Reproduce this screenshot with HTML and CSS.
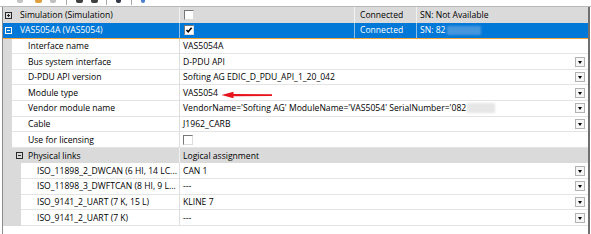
FILE: index.html
```html
<!DOCTYPE html>
<html>
<head>
<meta charset="utf-8">
<link rel="stylesheet" href="styles.css">
</head>
<body>
<div class="toolbar">
  <span class="ti t1"></span>
  <span class="ti t2"></span>
  <span class="ti t3"></span>
  <span class="tsep s1"></span>
  <span class="ti t4"></span>
  <span class="ti t5"></span>
  <span class="tsep s2"></span>
  <span class="ti t6"></span>
  <span class="tsep s3"></span>
  <span class="ti t7"></span>
</div>
<div class="grid">
  <div class="row group top">
    <div class="cell name gname"><svg class="exp" width="7" height="7" viewBox="0 0 7 7"><rect x="0.5" y="0.5" width="6" height="6" fill="none" stroke="currentColor"/><path d="M2 3.5H5M3.5 2V5" stroke="currentColor"/></svg><span>Simulation (Simulation)</span></div>
    <div class="cell val short"><span class="cb topcb"></span></div>
    <div class="cell stat">Connected</div>
    <div class="cell sn">SN: Not Available</div>
  </div>
  <div class="row sel top">
    <div class="cell name gname"><svg class="exp" width="7" height="7" viewBox="0 0 7 7"><rect x="0.5" y="0.5" width="6" height="6" fill="none" stroke="currentColor"/><path d="M2 3.5H5" stroke="currentColor"/></svg><span>VAS5054A (VAS5054)</span></div>
    <div class="cell val short"><span class="cb topcb"><svg width="8" height="8" viewBox="0 0 8 8"><path d="M1.5 4L3.2 5.8L6.6 1.8" fill="none" stroke="#000" stroke-width="1.6"/></svg></span></div>
    <div class="cell stat">Connected</div>
    <div class="cell sn">SN: 82<span class="redact-blue"></span></div>
  </div>
  <div class="row child">
    <div class="indent"></div>
    <div class="cell name">Interface name</div>
    <div class="cell val">VAS5054A</div>
  </div>
  <div class="row child">
    <div class="indent"></div>
    <div class="cell name">Bus system interface</div>
    <div class="cell val">D-PDU API<span class="dd"></span></div>
  </div>
  <div class="row child">
    <div class="indent"></div>
    <div class="cell name">D-PDU API version</div>
    <div class="cell val">Softing AG EDIC_D_PDU_API_1_20_042<span class="dd"></span></div>
  </div>
  <div class="row child">
    <div class="indent"></div>
    <div class="cell name">Module type</div>
    <div class="cell val mod">VAS5054<span class="dd"></span>
      <svg class="arrow" width="52" height="8" viewBox="0 0 52 8"><polygon points="0.5,4 12.5,0.8 12.5,2.9 51,3.3 51,4.9 12.5,5.2 12.5,7.2" fill="#e8141c"/></svg>
    </div>
  </div>
  <div class="row child">
    <div class="indent"></div>
    <div class="cell name">Vendor module name</div>
    <div class="cell val">VendorName='Softing AG' ModuleName='VAS5054' SerialNumber='082<span class="redact-gray"></span><span class="dd"></span></div>
  </div>
  <div class="row child">
    <div class="indent"></div>
    <div class="cell name">Cable</div>
    <div class="cell val">J1962_CARB<span class="dd"></span></div>
  </div>
  <div class="row child">
    <div class="indent"></div>
    <div class="cell name">Use for licensing</div>
    <div class="cell val"><span class="cb"></span></div>
  </div>
  <div class="row group">
    <div class="cell name pname"><svg class="exp" width="7" height="7" viewBox="0 0 7 7"><rect x="0.5" y="0.5" width="6" height="6" fill="none" stroke="currentColor"/><path d="M2 3.5H5" stroke="currentColor"/></svg><span>Physical links</span></div>
    <div class="cell val">Logical assignment</div>
  </div>
  <div class="row child iso">
    <div class="indent"></div>
    <div class="cell name">ISO_11898_2_DWCAN (6 HI, 14 LC...</div>
    <div class="cell val">CAN 1<span class="dd"></span></div>
  </div>
  <div class="row child iso">
    <div class="indent"></div>
    <div class="cell name">ISO_11898_3_DWFTCAN (8 HI, 9 L...</div>
    <div class="cell val">---<span class="dd"></span></div>
  </div>
  <div class="row child iso">
    <div class="indent"></div>
    <div class="cell name">ISO_9141_2_UART (7 K, 15 L)</div>
    <div class="cell val">KLINE 7<span class="dd"></span></div>
  </div>
  <div class="row child iso">
    <div class="indent"></div>
    <div class="cell name">ISO_9141_2_UART (7 K)</div>
    <div class="cell val">---<span class="dd"></span></div>
  </div>
</div>
</body>
</html>
```
FILE: styles.css
```css
* { box-sizing: border-box; }
html, body { margin: 0; padding: 0; }
body {
  width: 591px;
  height: 234px;
  overflow: hidden;
  background: #ffffff;
  font-family: "Open Sans", "Noto Sans", sans-serif;
  font-size: 8.6px;
  color: #000000;
}
.toolbar {
  height: 7.4px;
  border-bottom: 1px solid #b9b9b9;
  display: flex;
  align-items: flex-start;
  overflow: hidden;
}
.ti { display: block; height: 3px; border-radius: 0 0 2px 2px; }
.tsep { display: block; width: 1px; height: 5px; background: #a8a8a8; }
.t1 { margin-left: 17px; width: 6px; background: #c4c4c4; }
.t2 { margin-left: 12px; width: 7px; background: #e0a040; }
.t3 { margin-left: 8px; width: 6px; background: #c0c0c0; }
.s1 { margin-left: 10px; }
.t4 { margin-left: 9px; width: 7px; background: #404040; }
.t5 { margin-left: 8px; width: 7px; background: #404040; }
.s2 { margin-left: 8px; }
.t6 { margin-left: 9px; width: 5px; background: #303848; }
.s3 { margin-left: 10px; }
.t7 { margin-left: 9px; width: 4px; background: #4a80d0; }

.grid {
  position: relative;
  margin-left: 2px;
  width: 588px;
  height: 226.6px;
  border-left: 1px solid #8c8c8c;
  border-right: 2px solid #707070;
}
.row {
  display: flex;
  height: 15.62px;
}
.cell {
  display: flex;
  align-items: center;
  white-space: nowrap;
  overflow: hidden;
  height: 100%;
}
.name {
  border-right: 1px solid #dedede;
}
.group { background: #dadada; }
.group .name { border-right-color: #f2f2f2; }
.sel {
  background: #0078d7;
  color: #ffffff;
  border-bottom: 1px solid #f0a23c;
}
.sel .cell { height: auto; }
.sel .name { border-right-color: #8fc0ec; }
.gname { width: 177px; padding-left: 2px; }
.gname .exp { margin-right: 8px; flex: none; }
.pname { width: 177px; padding-left: 13px; }
.pname .exp { margin-right: 5px; flex: none; }
.exp { color: #2a2a2a; }
.sel .exp { color: #ffffff; }

.short { width: 87px; padding-left: 3px; border-right: 1px solid #e6e6e6; }
.group .short { border-right-color: #f2f2f2; }
.sel .short { border-right-color: #8fc0ec; }
.stat { width: 62px; padding-left: 5px; border-right: 1px solid #e6e6e6; }
.group .stat { border-right-color: #f2f2f2; }
.sel .stat { border-right-color: #8fc0ec; }
.sn { flex: 1; padding-left: 3px; }

.indent { width: 9px; background: #dadada; flex: none; }
.child .name {
  width: 168px;
  padding-left: 16px;
  border-bottom: 1px solid #e4e4e4;
}
.iso .indent { width: 18px; }
.iso .name { width: 159px; padding-left: 16px; }
.val { flex: 1; padding-left: 3px; padding-right: 3px; }
.child .val { border-bottom: 1px solid #e4e4e4; }
.mod { position: relative; }

.dd {
  margin-left: auto;
  width: 10px;
  height: 10px;
  border: 1px solid #b2b2b2;
  background: #f6f6f6;
  display: flex;
  align-items: center;
  justify-content: center;
  flex: none;
}
.dd::after {
  content: "";
  border-left: 2.5px solid transparent;
  border-right: 2.5px solid transparent;
  border-top: 3px solid #000000;
  margin-top: 1px;
}
.cb {
  width: 10px;
  height: 10px;
  background: #ffffff;
  border: 1px solid;
  border-color: #777777 #dcdcdc #dcdcdc #777777;
  display: flex;
  align-items: center;
  justify-content: center;
  flex: none;
}
.topcb { margin-left: 1px; }
.arrow {
  position: absolute;
  left: 41px;
  top: 6px;
}
.redact-blue {
  display: inline-block;
  width: 34px;
  height: 9px;
  margin-left: 1px;
  background: #4696dd;
  filter: blur(0.8px);
}
.redact-gray {
  display: inline-block;
  width: 28px;
  height: 10px;
  margin-left: 1px;
  background: #e6e6e6;
  filter: blur(0.8px);
}
```
